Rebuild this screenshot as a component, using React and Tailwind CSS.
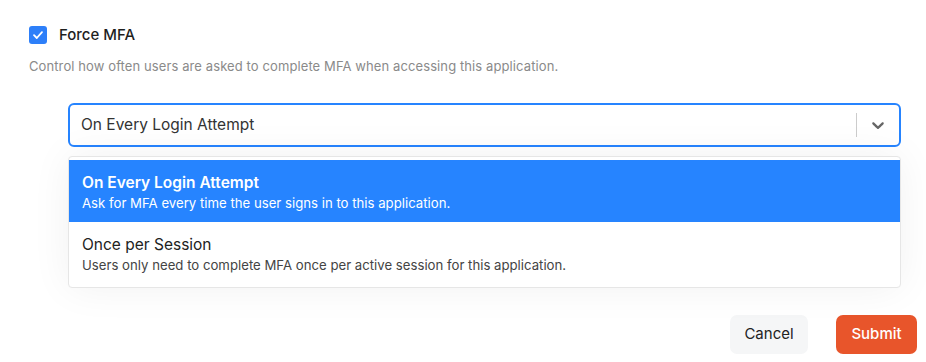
import React, { useState } from 'react';

const options = [
  {
    value: 'every',
    label: 'On Every Login Attempt',
    hint: 'Ask for MFA every time the user signs in to this application.',
  },
  {
    value: 'session',
    label: 'Once per Session',
    hint: 'Users only need to complete MFA once per active session for this application.',
  },
];

const App = () => {
  const [forceMfa, setForceMfa] = useState(true);
  const [selected, setSelected] = useState('every');

  const current = options.find(o => o.value === selected);

  return (
    <div className="w-[926px] h-[362px] bg-white overflow-hidden font-['Inter',sans-serif] text-[#1f1f1f]">
      <div className="h-[288px] pl-[29px] pr-[25px] pt-[24px]">
        <label className="flex items-center gap-3 cursor-pointer">
          <span
            onClick={() => setForceMfa(!forceMfa)}
            className="w-[18px] h-[18px] rounded-[3px] bg-[#2d7ff9] flex items-center justify-center"
          >
            {forceMfa && (
              <svg width="12" height="12" viewBox="0 0 12 12" fill="none">
                <path d="M2 6.2 4.8 9 10 3.2" stroke="white" strokeWidth="1.8" strokeLinecap="round" strokeLinejoin="round" />
              </svg>
            )}
          </span>
          <span className="text-[15px] font-medium">Force MFA</span>
        </label>
        <p className="mt-[10px] text-[13px] text-[#8a8a8a] tracking-[0.1px]">
          Control how often users are asked to complete MFA when accessing this application.
        </p>

        <div className="relative ml-[39px] mt-[27px]">
          <div className="h-[44px] border-2 border-[#2684ff] rounded-[6px] flex items-center">
            <span className="flex-1 pl-[11px] text-[15.5px] text-[#333]">{current.label}</span>
            <span className="w-px h-[24px] bg-[#cccccc]" />
            <span className="w-[42px] flex items-center justify-center text-[#666]">
              <svg width="20" height="20" viewBox="0 0 20 20" fill="currentColor">
                <path d="M4.516 7.548c.436-.446 1.043-.481 1.576 0L10 11.295l3.908-3.747c.533-.481 1.141-.446 1.574 0 .436.445.408 1.197 0 1.615-.406.418-4.695 4.502-4.695 4.502a1.095 1.095 0 0 1-1.576 0S4.924 9.581 4.516 9.163c-.409-.418-.436-1.17 0-1.615z" />
              </svg>
            </span>
          </div>

          <div className="absolute left-0 right-0 top-full mt-[9px] bg-white border border-[#e6e6e6] rounded-[4px] py-[3px] shadow-[0_0_40px_rgba(0,0,0,0.06)]">
            {options.map(o => {
              const active = o.value === selected;
              return (
                <div
                  key={o.value}
                  onClick={() => setSelected(o.value)}
                  className={`h-[62px] px-[13px] pt-[2px] flex flex-col justify-center cursor-pointer ${active ? 'bg-[#2684ff] text-white' : 'text-[#222]'}`}
                >
                  <div className={`text-[15.5px] leading-[22px] ${active ? 'font-semibold' : ''}`}>{o.label}</div>
                  <div className={`text-[13.2px] leading-[19px] ${active ? 'text-white' : 'text-[#444]'}`}>{o.hint}</div>
                </div>
              );
            })}
          </div>
        </div>
      </div>

      <div className="flex justify-end items-center gap-[28px] pt-[27px] pr-[9px]">
        <button className="w-[78px] h-[39px] rounded-[7px] bg-[#f5f6f7] text-[15px] text-[#222]">Cancel</button>
        <button className="w-[81px] h-[39px] rounded-[7px] bg-[#e8552b] text-[15px] font-medium text-white">Submit</button>
      </div>
    </div>
  );
};

export default App;
